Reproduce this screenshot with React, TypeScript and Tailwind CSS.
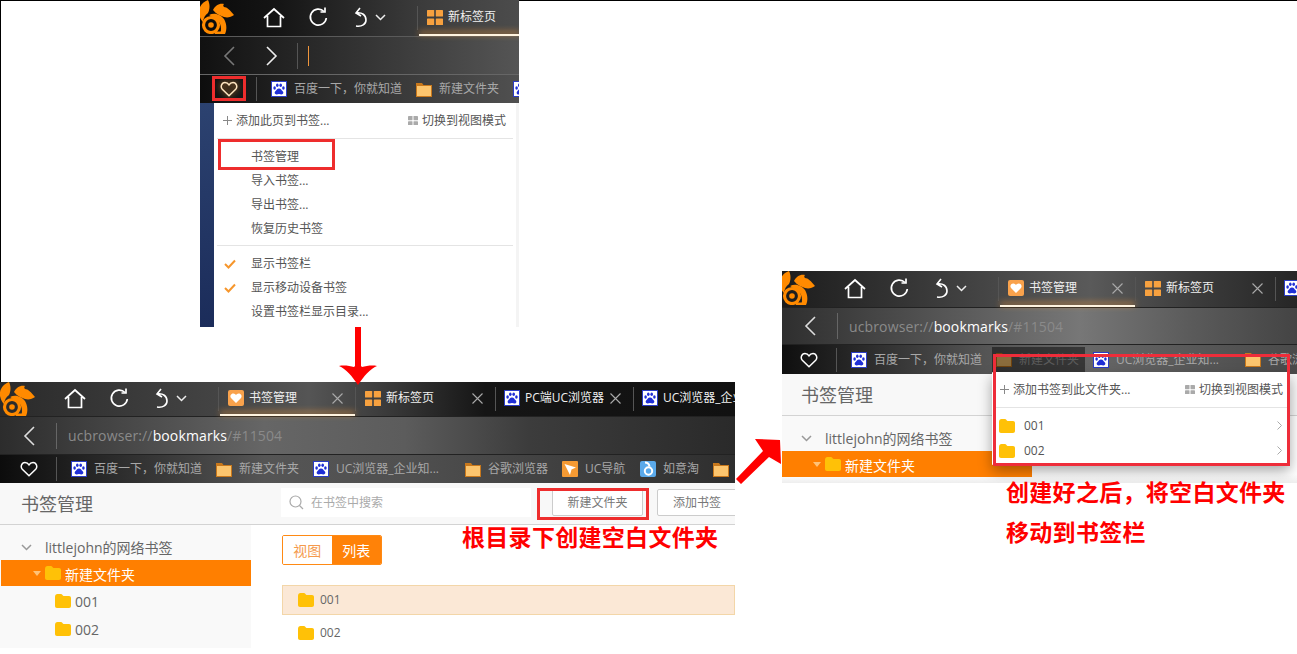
import React from "react";

const Logo = () => (
  <svg width="35" height="34" viewBox="0 0 35 34" className="shrink-0" fill="#ff8a00">
    <path d="M9 0C3 2-1 8 0 14c1 4 2 6 4 8 .5-4 2-7 5-9 2-4 2-9 0-13z" />
    <circle cx="12" cy="25" r="7.500" fill="none" stroke="#ff8a00" strokeWidth="3.200" />
    <circle cx="12" cy="25" r="2.800" />
    <path d="M14 10c2-4 6-7 11-6-1 1-1 2 0 3 3 0 6 3 10 8-3 2-6 3-10 2-3-1-8-3-11-7z" />
    <path d="M10 15c6-3 12 0 15 4 3 5 3 11 1 15h-5c2-5 1-11-3-14-3-2-5-3-8-5z" />
    <path d="M16 34h9v-2.500h-9z" />
  </svg>
);

const Home = () => (
  <svg width="22" height="21" viewBox="0 0 22 21" fill="none" stroke="#fff" strokeWidth="1.7">
    <path d="M1 11 11 2l10 9M4.500 9v10.500h13V9" />
  </svg>
);
const Refresh = () => (
  <svg width="20" height="20" viewBox="0 0 20 20" fill="none" stroke="#fff" strokeWidth="1.7">
    <path d="M16 4.500A8 8 0 1 0 18.300 11" />
    <path d="M17 .5V5h-4.500" />
  </svg>
);
const Undo = () => (
  <svg width="14" height="21" viewBox="0 0 14 21" fill="none" stroke="#fff" strokeWidth="1.600">
    <path d="M6 1 2 6l5 3M2 6c6-1 10 2 10 7 0 4-4 7-10 6" />
  </svg>
);
const Chevron = ({ c = "#eee", s = 11 }: { c?: string; s?: number }) => (
  <svg width={s} height={s} viewBox="0 0 11 11" fill="none" stroke={c} strokeWidth="1.500" className="shrink-0">
    <path d="M1 3l4.500 4.500L10 3" />
  </svg>
);
const Close = () => (
  <svg width="11" height="11" viewBox="0 0 11 11" stroke="#aaa" strokeWidth="1.100">
    <path d="M.5.5l10 10M10.500.5l-10 10" />
  </svg>
);
const Grid = ({ c = "#f7a13f", s = 16 }: { c?: string; s?: number }) => (
  <svg width={s} height={(s * 15) / 16} viewBox="0 0 16 15" fill={c} className="shrink-0">
    <rect width="7.200" height="6.600" rx=".6" />
    <rect x="8.800" width="7.200" height="6.600" rx=".6" />
    <rect y="8.400" width="7.200" height="6.600" rx=".6" />
    <rect x="8.800" y="8.400" width="7.200" height="6.600" rx=".6" />
  </svg>
);
const HeartTab = () => (
  <svg width="16" height="16" viewBox="0 0 16 16" className="shrink-0">
    <rect width="16" height="16" rx="2" fill="#f9a24c" />
    <path d="M8 13 3 8C1.500 6 3 3.500 5.300 3.500 6.600 3.500 7.500 4.300 8 5c.5-.7 1.400-1.500 2.700-1.500C13 3.500 14.500 6 13 8z" fill="#fff" />
  </svg>
);
const Baidu = () => (
  <svg width="16" height="16" viewBox="0 0 16 16" className="shrink-0">
    <rect x=".5" y=".5" width="15" height="15" fill="#fff" stroke="#2b3cc4" />
    <g fill="#1f2fd6">
      <ellipse cx="3.600" cy="7" rx="1.300" ry="1.800" />
      <ellipse cx="6.300" cy="4.300" rx="1.300" ry="1.800" />
      <ellipse cx="9.700" cy="4.300" rx="1.300" ry="1.800" />
      <ellipse cx="12.400" cy="7" rx="1.300" ry="1.800" />
      <path d="M8 7.500c2 0 2.500 1.800 3.700 2.800 1.300 1.100.6 3.200-1.200 3.200-1 0-1.600-.4-2.500-.4s-1.500.4-2.500.4c-1.800 0-2.500-2.100-1.200-3.200C5.500 9.300 6 7.500 8 7.500z" />
    </g>
  </svg>
);
const FolderBar = () => (
  <svg width="16" height="15" viewBox="0 0 16 15" className="shrink-0">
    <path d="M0 1h6l1.500 2H16v12H0z" fill="#c8781c" />
    <rect x="1" y="4" width="14" height="10" fill="#fcc56e" />
  </svg>
);
const ArrowIco = () => (
  <svg width="16" height="16" viewBox="0 0 16 16" className="shrink-0">
    <rect width="16" height="16" rx="1" fill="#f59a33" />
    <path d="M2.500 3 14 6.500 9.500 8.500 8 14z" fill="#fff" />
  </svg>
);
const Ruyi = () => (
  <svg width="16" height="16" viewBox="0 0 16 16" className="shrink-0">
    <rect width="16" height="16" rx="2" fill="#5aa9ea" />
    <circle cx="8.500" cy="10" r="3.700" fill="none" stroke="#fff" strokeWidth="2" />
    <path d="M5 1.500c2 0 4 1 4.500 4" fill="none" stroke="#fff" strokeWidth="2" />
  </svg>
);
const YFolder = ({ cls = "" }: { cls?: string }) => (
  <svg width="16" height="14" viewBox="0 0 16 14" className={"shrink-0 " + cls}>
    <path d="M0 3c0-2 1-3 2.500-3H6c1 0 1.500 1.500 2.500 2H14c1.200 0 2 .8 2 2v8c0 1.200-.8 2-2 2H2c-1.200 0-2-.8-2-2z" fill="#ffc107" />
  </svg>
);
const HeartOutline = ({ glow = false }: { glow?: boolean }) => (
  <svg
    width="18"
    height="16"
    viewBox="0 0 18 16"
    fill="none"
    stroke={glow ? "#ffe6c2" : "#fff"}
    strokeWidth="1.500"
    className={glow ? "shrink-0 drop-shadow-[0_0_3px_#f79a3a]" : "shrink-0"}
  >
    <path d="M9 14.800 2.300 8.200C.2 6 1.500 1.500 5 1.500c1.900 0 3.200 1 4 2.300.8-1.300 2.100-2.300 4-2.300 3.500 0 4.800 4.500 2.700 6.700z" />
  </svg>
);
const Back = ({ c = "#ddd" }: { c?: string }) => (
  <svg width="12" height="20" viewBox="0 0 12 20" fill="none" stroke={c} strokeWidth="1.600">
    <path d="M11 1 2 10l9 9" />
  </svg>
);
const Forward = () => (
  <svg width="12" height="20" viewBox="0 0 12 20" fill="none" stroke="#eee" strokeWidth="1.600">
    <path d="M1 1l9 9-9 9" />
  </svg>
);
const Check = () => (
  <svg width="12" height="10" viewBox="0 0 12 10" fill="none" stroke="#f6962c" strokeWidth="2">
    <path d="M1 5l3.500 3.500L11 1.500" />
  </svg>
);
const Plus = () => (
  <svg width="9" height="9" viewBox="0 0 9 9" stroke="#888" strokeWidth="1">
    <path d="M4.500 0v9M0 4.500h9" />
  </svg>
);

const Sep = ({ cls = "" }: { cls?: string }) => <div className={"w-px h-[24px] bg-[#555] shrink-0 " + cls} />;

function Tab({ wide, icon, text, close = true, active = false }: { wide: string; icon: React.ReactNode; text: string; close?: boolean; active?: boolean }) {
  return (
    <div className={"relative h-full flex items-center pl-[8px] shrink-0 " + wide}>
      <div className="flex flex-1 min-w-0 items-center pb-[2px]">
        {icon}
        <span className="ml-[5px] text-[12px] text-[#f0f0f0] whitespace-nowrap overflow-hidden">{text}</span>
        {close && (
          <span className="ml-auto mr-[12px] shrink-0">
            <Close />
          </span>
        )}
      </div>
      {active && <div className="absolute left-0 right-0 bottom-0 h-[2px] bg-[#fff3df] shadow-[0_-2px_6px_#f79a3a]" />}
    </div>
  );
}

function TabLeft() {
  return (
    <>
      <div className="self-start">
        <Logo />
      </div>
      <div className="ml-[20px] w-[40px] flex justify-center shrink-0 pb-[2px]">
        <Home />
      </div>
      <div className="ml-[4px] w-[40px] flex justify-center shrink-0 pb-[2px]">
        <Refresh />
      </div>
      <div className="ml-[16px] w-[46px] flex items-center gap-[7px] shrink-0 pb-[2px]">
        <Undo />
        <Chevron />
      </div>
      <Sep cls="ml-[17px] mr-px" />
    </>
  );
}

function Addr() {
  return (
    <>
      <div className="ml-[23px] w-[12px] flex">
        <Back />
      </div>
      <div className="ml-[21px] w-px h-[26px] bg-[#666] shrink-0" />
      <span className="ml-[11px] text-[14px] tracking-[0.13px] text-[#8a8a8a] whitespace-nowrap">
        ucbrowser://<span className="text-white">bookmarks</span>/#11504
      </span>
    </>
  );
}

function Bm({ wide, icon, text, gap = "ml-[7px]" }: { wide: string; icon: React.ReactNode; text?: string; gap?: string }) {
  return (
    <div className={"h-full flex items-center shrink-0 " + wide}>
      {icon}
      {text && <span className={"text-[12px] text-[#a8a8a8] whitespace-nowrap " + gap}>{text}</span>}
    </div>
  );
}

function BookmarkBar({ glow = false }: { glow?: boolean }) {
  return (
    <>
      <div className="ml-[20px] w-[18px] flex shrink-0">
        <HeartOutline glow={glow} />
      </div>
      <div className="ml-[18px] w-px h-[24px] bg-[#555] shrink-0" />
      <div className="ml-[14px] w-[145px] flex h-full shrink-0">
        <Bm wide="w-[145px]" icon={<Baidu />} text="百度一下，你就知道" />
      </div>
      <Bm wide="w-[97px]" icon={<FolderBar />} text="新建文件夹" />
      <Bm wide="w-[152px]" icon={<Baidu />} text="UC浏览器_企业知..." />
      <Bm wide="w-[97px]" icon={<FolderBar />} text="谷歌浏览器" />
      <Bm wide="w-[78px]" icon={<ArrowIco />} text="UC导航" />
      <Bm wide="w-[73px]" icon={<Ruyi />} text="如意淘" />
      <Bm wide="w-[40px]" icon={<FolderBar />} />
    </>
  );
}

function Title() {
  return <div className="pl-[21px] text-[18px] leading-[24px] text-[#666]">书签管理</div>;
}

function Tree({ children }: { children?: React.ReactNode }) {
  return (
    <>
      <div className="h-[35px] flex items-center pl-[21px] pt-[10px]">
        <Chevron c="#999" />
        <span className="ml-[13px] text-[14px] text-[#666]">littlejohn的网络书签</span>
      </div>
      <div className="ml-px h-[26px] bg-[#ff7f00] flex items-center pl-[32px]">
        <span className="w-0 h-0 border-l-[4px] border-r-[4px] border-t-[5px] border-l-transparent border-r-transparent border-t-[#ffc277]" />
        <YFolder cls="ml-[4px]" />
        <span className="ml-[4px] pt-[2px] text-[14px] text-white">新建文件夹</span>
      </div>
      {children}
    </>
  );
}

function TreeRow({ t }: { t: string }) {
  return (
    <div className="h-[28px] flex items-center pl-[55px]">
      <YFolder />
      <span className="ml-[4px] text-[14px] text-[#666]">{t}</span>
    </div>
  );
}

function MenuHead({ text, cls }: { text: string; cls: string }) {
  return (
    <div className={"flex items-center text-[12px] text-[#555] " + cls}>
      <Plus />
      <span className="ml-[4px]">{text}</span>
      <span className="ml-auto flex items-center gap-[4px]">
        <Grid c="#aaa" s={10} />
        切换到视图模式
      </span>
    </div>
  );
}

function MenuRow({ t, check = false }: { t: string; check?: boolean }) {
  return (
    <div className="h-[24px] flex items-center text-[12px] text-[#555]">
      <div className="w-[37px] pl-[10px] flex">{check && <Check />}</div>
      {t}
    </div>
  );
}

function Shot1() {
  return (
    <div className="absolute left-[200px] top-0 w-[319px] h-[327px] overflow-hidden flex flex-col bg-[#1f2f58]">
      <div className="h-[37px] shrink-0 -ml-px w-[320px] flex items-center bg-[linear-gradient(90deg,#0a0a0a_0%,#151515_25%,#3c3c3c_70%,#4c4c4c_100%)] border-b border-[#5a5a5a]">
        <TabLeft />
        <Tab wide="w-[101px]" icon={<Grid />} text="新标签页" close={false} active />
      </div>
      <div className="h-[38px] shrink-0 flex items-center bg-[linear-gradient(90deg,#111_0%,#333_50%,#555_100%)] border-b border-[#666]">
        <div className="ml-[23px] w-[12px] flex">
          <Back c="#777" />
        </div>
        <div className="ml-[31px] w-[12px] flex">
          <Forward />
        </div>
        <div className="ml-[19px] w-px h-[26px] bg-[#555]" />
        <div className="ml-[10px] w-px h-[20px] bg-[#f0963c]" />
      </div>
      <div className="relative h-[28px] shrink-0 flex items-center bg-[linear-gradient(90deg,#0d0d0d_0%,#2c2c2c_40%,#505050_100%)]">
        <BookmarkBar glow />
        <div className="absolute left-[12px] top-[1px] w-[34px] h-[25px] border-[3px] border-[#ee2d2d]" />
      </div>
      <div className="flex-1 flex min-h-0">
        <div className="w-[14px] shrink-0 bg-[linear-gradient(180deg,#2c4270_0%,#1b2c5a_100%)]" />
        <div className="relative w-[302px] shrink-0 bg-white">
          <MenuHead text="添加此页到书签..." cls="h-[35px] px-[9px] pr-[10px]" />
          <div className="mx-[3px] h-px bg-[#e4e4e4]" />
          <div className="pt-[6px]">
            <MenuRow t="书签管理" />
            <MenuRow t="导入书签..." />
            <MenuRow t="导出书签..." />
            <MenuRow t="恢复历史书签" />
          </div>
          <div className="mx-[3px] mt-[4px] h-px bg-[#e4e4e4]" />
          <div className="pt-[6px]">
            <MenuRow t="显示书签栏" check />
            <MenuRow t="显示移动设备书签" check />
            <MenuRow t="设置书签栏显示目录..." />
          </div>
          <div className="absolute left-[4px] top-[36px] w-[117px] h-[31px] border-[3px] border-[#ee2d2d]" />
        </div>
        <div className="flex-1 bg-[#f4f4f4]" />
      </div>
    </div>
  );
}

function Shot2() {
  return (
    <div className="absolute left-0 top-[382px] w-[735px] h-[272px] overflow-hidden flex flex-col bg-white">
      <div className="h-[35px] shrink-0 flex items-center bg-[linear-gradient(90deg,#2a2a2a_0%,#444_30%,#555_42%,#3c3c3c_52%,#151515_66%,#111_100%)] border-b border-[#222]">
        <TabLeft />
        <Tab wide="w-[135px]" icon={<HeartTab />} text="书签管理" active />
        <Sep cls="mr-px" />
        <Tab wide="w-[138px]" icon={<Grid />} text="新标签页" />
        <Sep />
        <Tab wide="w-[137px]" icon={<Baidu />} text="PC端UC浏览器" />
        <Sep />
        <Tab wide="w-[120px]" icon={<Baidu />} text="UC浏览器_企业知识" close={false} />
      </div>
      <div className="h-[38px] shrink-0 flex items-center bg-[linear-gradient(90deg,#2c2c2c_0%,#666_36%,#5c5c5c_55%,#3c3c3c_72%,#2a2a2a_100%)] border-b border-[#222]">
        <Addr />
      </div>
      <div className="h-[28px] shrink-0 flex items-center bg-[linear-gradient(90deg,#0c0c0c_0%,#555_36%,#505050_55%,#2e2e2e_100%)]">
        <BookmarkBar />
      </div>
      <div className="relative h-[42px] shrink-0 flex items-center bg-[#f8f8f8] border-b border-[#d3d3d3]">
        <Title />
        <div className="absolute left-[281px] top-[5px] w-[250px] h-[29px] bg-white flex items-center pl-[8px]">
          <svg width="15" height="15" viewBox="0 0 15 15" fill="none" stroke="#aaa" strokeWidth="1.200">
            <circle cx="6.500" cy="6.500" r="5.500" />
            <path d="M10.500 10.500 14 14" />
          </svg>
          <span className="ml-[7px] text-[12px] text-[#aaa]">在书签中搜索</span>
        </div>
        <div className="absolute left-[552px] top-[6px] w-[91px] h-[27px] bg-white border border-[#ccc] rounded-[2px] flex items-center justify-center text-[12px] text-[#777]">
          新建文件夹
        </div>
        <div className="absolute left-[657px] top-[6px] w-[90px] h-[27px] bg-white border border-[#ccc] rounded-[2px] flex items-center pl-[15px] text-[12px] text-[#777]">
          添加书签
        </div>
        <div className="absolute left-[537px] top-[5px] w-[112px] h-[32px] border-[3px] border-[#ee2d2d]" />
      </div>
      <div className="flex flex-1 min-h-0">
        <div className="w-[251px] shrink-0 bg-[#f9f9f9] h-[123px]">
          <Tree>
            <div className="h-px" />
            <TreeRow t="001" />
            <TreeRow t="002" />
          </Tree>
        </div>
        <div className="flex-1 pl-[31px] pt-[10px]">
          <div className="flex w-[100px] h-[30px] rounded-[2px] border border-[#ff8a14] text-[14px] overflow-hidden">
            <div className="w-[49px] flex items-center justify-center bg-white text-[#f59a4c]">视图</div>
            <div className="w-[50px] flex items-center justify-center bg-[#ff8208] text-white">列表</div>
          </div>
          <div className="mt-[20px] h-[30px] flex items-center pl-[15px] bg-[#fbe8d6] border border-[#f3d6a8] text-[12px] text-[#666]">
            <YFolder />
            <span className="ml-[6px]">001</span>
          </div>
          <div className="h-[36px] flex items-center pl-[16px] text-[12px] text-[#666]">
            <YFolder />
            <span className="ml-[6px]">002</span>
          </div>
        </div>
      </div>
    </div>
  );
}

function Shot3() {
  return (
    <div className="absolute left-[782px] top-[271px] w-[515px] h-[212px] overflow-hidden flex flex-col">
      <div className="h-[37px] shrink-0 -ml-[2px] w-[517px] flex items-center bg-[linear-gradient(90deg,#1c1c1c_0%,#404040_35%,#5a5a5a_60%,#3c3c3c_80%,#262626_100%)] border-b border-[#222]">
        <TabLeft />
        <Tab wide="w-[135px]" icon={<HeartTab />} text="书签管理" active />
        <Sep cls="mr-px" />
        <Tab wide="w-[138px]" icon={<Grid />} text="新标签页" />
        <Sep />
        <Tab wide="w-[24px]" icon={<Baidu />} text="" close={false} />
      </div>
      <div className="h-[37px] shrink-0 -ml-[2px] w-[517px] flex items-center bg-[linear-gradient(90deg,#2e2e2e_0%,#5a5a5a_35%,#777_58%,#5a5a5a_80%,#444_100%)] border-b border-[#222]">
        <div className="w-px" />
        <Addr />
      </div>
      <div className="relative h-[29px] shrink-0 -ml-[2px] w-[517px] flex items-center bg-[linear-gradient(90deg,#0e0e0e_0%,#555_40%,#666_60%,#4a4a4a_100%)]">
        <BookmarkBar />
        <div className="absolute left-[212px] top-[2px] w-[93px] h-[27px] bg-black/45" />
      </div>
      <div className="relative flex-1 min-h-0 -ml-[2px] w-[517px] bg-[linear-gradient(180deg,#fff_0%,#fff_92%,#eee_100%)]">
        <div className="h-[42px] flex items-center bg-[#f8f8f8] border-b border-[#d3d3d3]">
          <Title />
        </div>
        <div className="w-[252px] h-[61px] bg-[#f9f9f9]">
          <Tree />
        </div>
      </div>
      <div className="absolute left-[210px] top-[101px] w-[298px] h-[93px] bg-white rounded-[1px] shadow-[0_6px_14px_rgba(0,0,0,0.35)]">
        <MenuHead text="添加书签到此文件夹..." cls="h-[35px] pl-[8px] pr-[7px]" />
        <div className="h-px mx-[3px] bg-[#e4e4e4]" />
        <div className="pt-[5px]">
          {["001", "002"].map((t) => (
            <div key={t} className="h-[25px] flex items-center pl-[7px] pr-[8px] text-[12px] text-[#555]">
              <YFolder />
              <span className="ml-[9px]">{t}</span>
              <svg width="5" height="9" viewBox="0 0 5 9" fill="none" stroke="#aaa" className="ml-auto">
                <path d="M.5.5l4 4-4 4" />
              </svg>
            </div>
          ))}
        </div>
      </div>
      <div className="absolute left-[211px] top-[83px] w-[297px] h-[112px] border-[3px] border-[#ee2d3a]" />
    </div>
  );
}

export default function App() {
  return (
    <div className="relative w-[1297px] h-[654px] overflow-hidden bg-white shadow-[inset_1px_1px_0_#000] font-['Open_Sans','Noto_Sans_CJK_SC',sans-serif]">
      <Shot1 />
      <Shot2 />
      <Shot3 />
      <svg width="40" height="60" viewBox="0 0 40 60" className="absolute left-[338px] top-[326px]">
        <path d="M17 1h6v39l1 1c4-1 10-2 15-1-7 3-13 10-19 19C14 50 8 43 1 40c5-1 11 0 15 1l1-1z" fill="#f00" />
      </svg>
      <svg width="48" height="48" viewBox="0 0 48 48" className="absolute left-[735px] top-[438px]">
        <path d="M1 41 28 13 20 1 45 2 46 26 34 19 6 46z" fill="#f00" />
      </svg>
      <div className="absolute left-[462px] top-[520px] text-[23px] leading-[34px] tracking-[0.3px] font-bold text-[#f00] whitespace-nowrap">根目录下创建空白文件夹</div>
      <div className="absolute left-[1006px] top-[475px] text-[23px] leading-[34px] tracking-[0.3px] font-bold text-[#f00] whitespace-nowrap">创建好之后，将空白文件夹</div>
      <div className="absolute left-[1006px] top-[515px] text-[23px] leading-[34px] tracking-[0.3px] font-bold text-[#f00] whitespace-nowrap">移动到书签栏</div>
    </div>
  );
}
